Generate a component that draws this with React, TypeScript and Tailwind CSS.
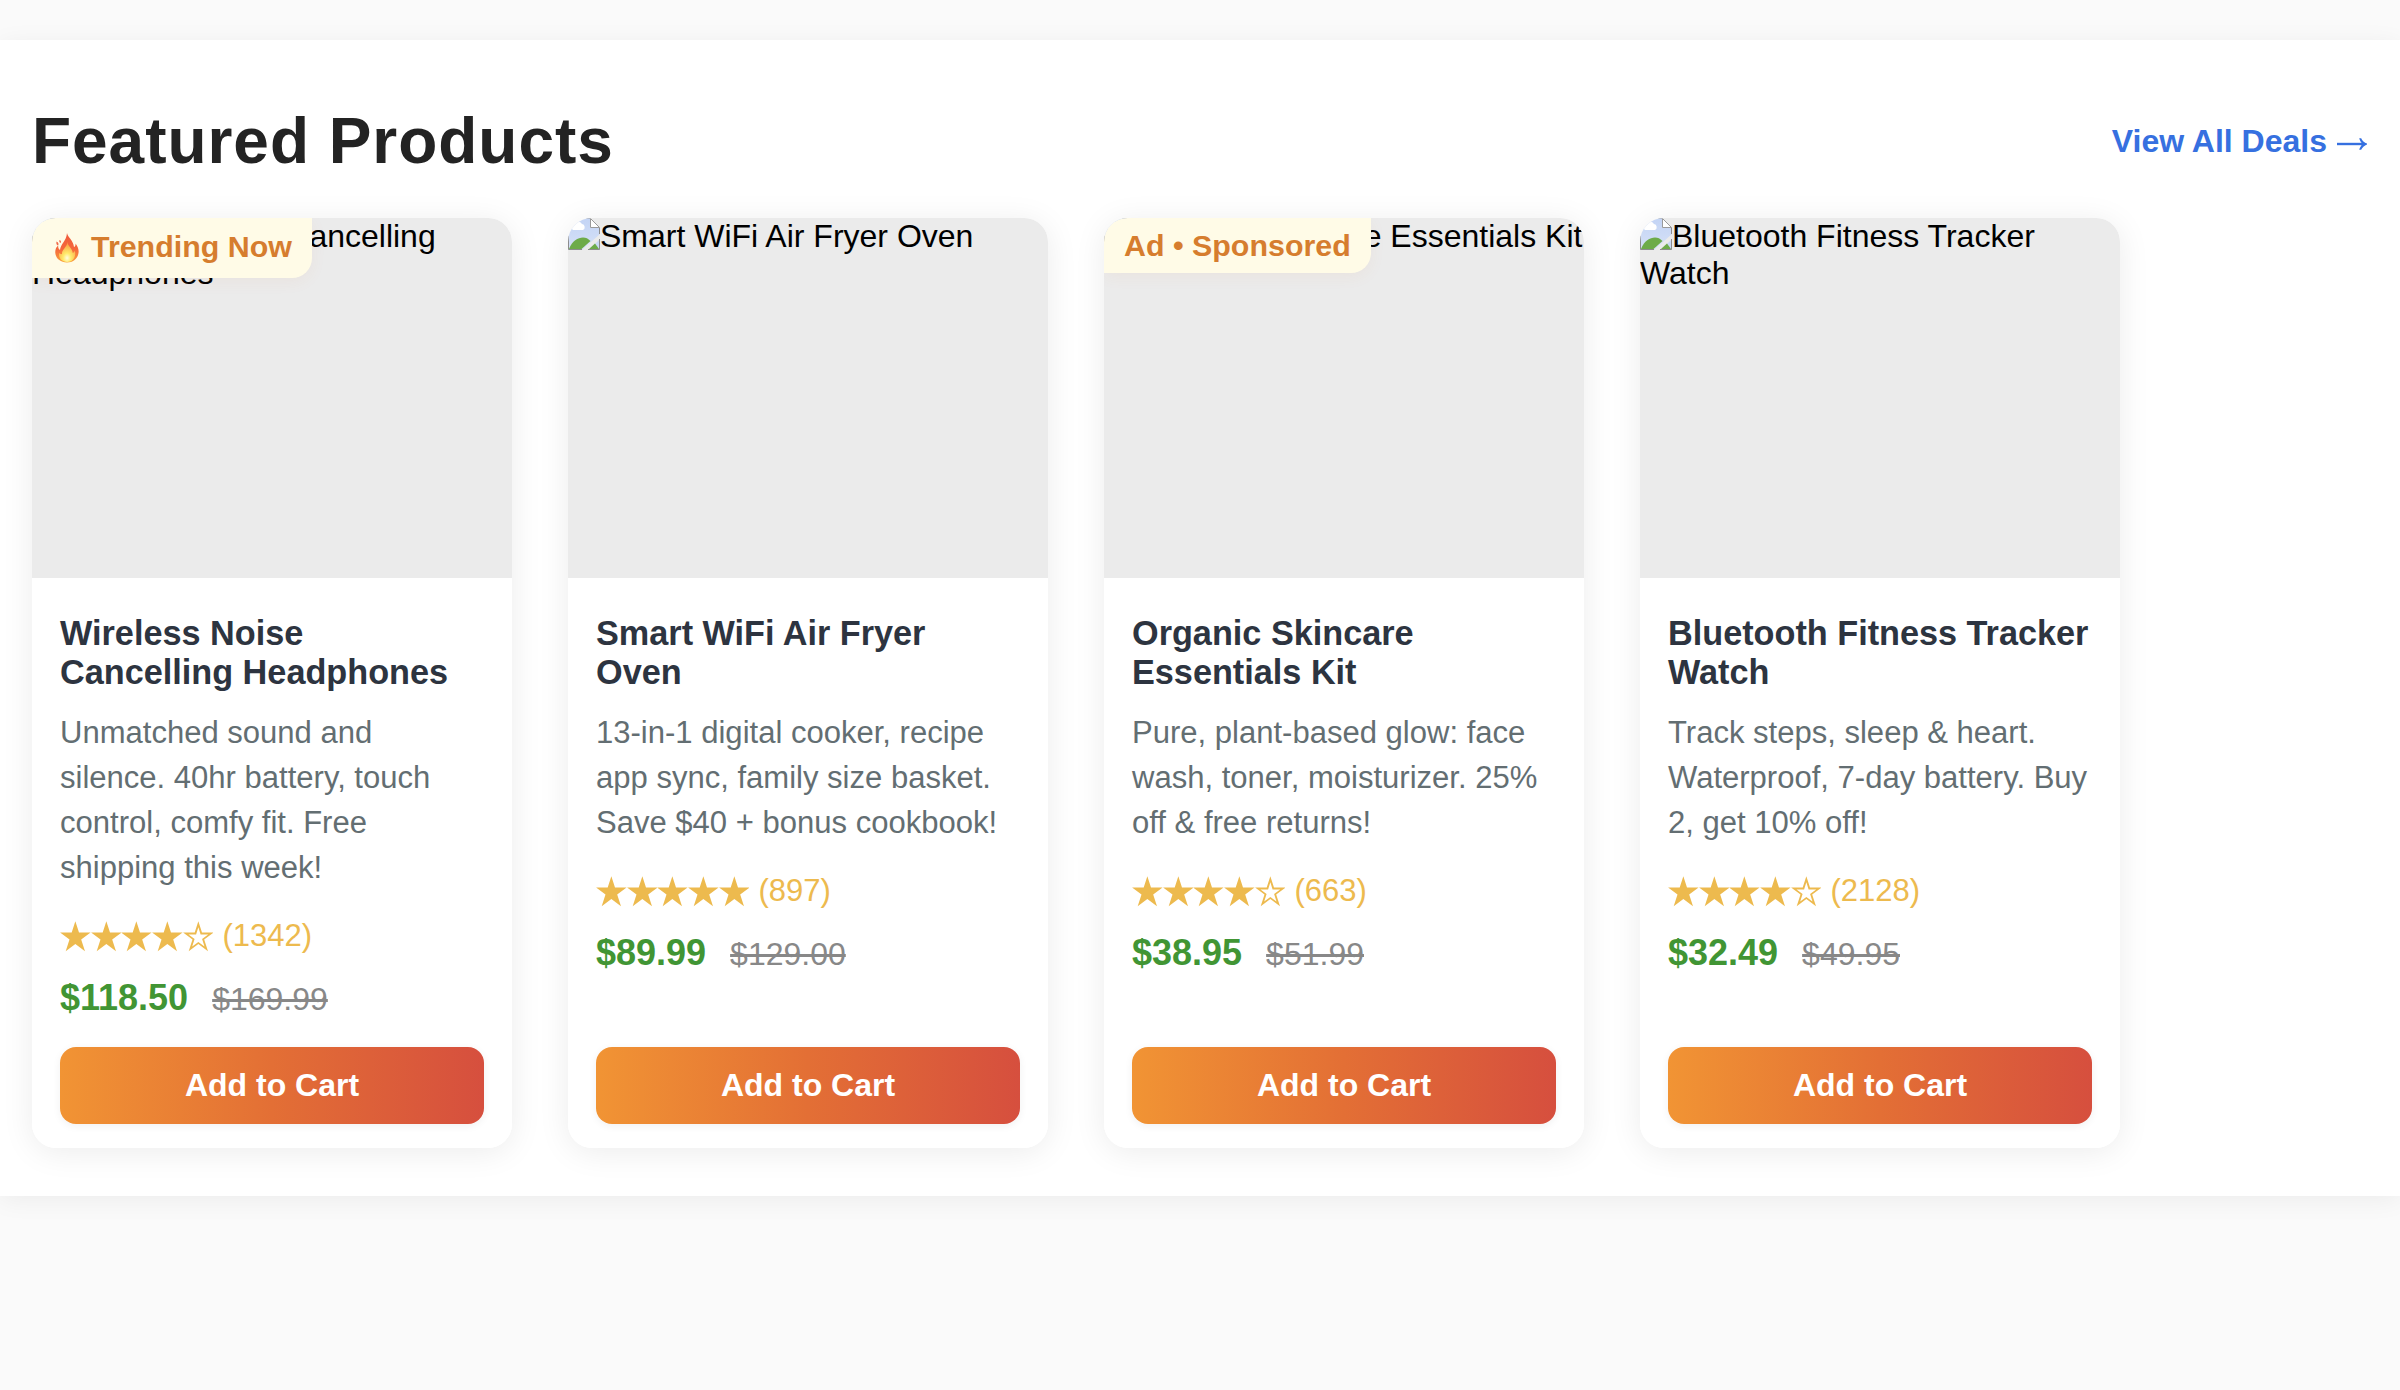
type Product = {
  title: string;
  description: string;
  stars: number;
  reviews: number;
  price: string;
  oldPrice: string;
  badge?: "trending" | "sponsored";
};

const products: Product[] = [
  {
    title: "Wireless Noise Cancelling Headphones",
    description:
      "Unmatched sound and silence. 40hr battery, touch control, comfy fit. Free shipping this week!",
    stars: 4,
    reviews: 1342,
    price: "$118.50",
    oldPrice: "$169.99",
    badge: "trending",
  },
  {
    title: "Smart WiFi Air Fryer Oven",
    description:
      "13-in-1 digital cooker, recipe app sync, family size basket. Save $40 + bonus cookbook!",
    stars: 5,
    reviews: 897,
    price: "$89.99",
    oldPrice: "$129.00",
  },
  {
    title: "Organic Skincare Essentials Kit",
    description:
      "Pure, plant-based glow: face wash, toner, moisturizer. 25% off & free returns!",
    stars: 4,
    reviews: 663,
    price: "$38.95",
    oldPrice: "$51.99",
    badge: "sponsored",
  },
  {
    title: "Bluetooth Fitness Tracker Watch",
    description:
      "Track steps, sleep & heart. Waterproof, 7-day battery. Buy 2, get 10% off!",
    stars: 4,
    reviews: 2128,
    price: "$32.49",
    oldPrice: "$49.95",
  },
];

function BrokenImageIcon() {
  return (
    <svg viewBox="0 0 32 32" className="inline-block size-8 align-top" aria-hidden="true">
      <defs>
        <linearGradient id="sky" x1="0" y1="0" x2="0" y2="1">
          <stop offset="0" stopColor="#c3d4f5" />
          <stop offset="1" stopColor="#d6e1f7" />
        </linearGradient>
      </defs>
      <path d="M0 0H22V10H32V16L14 32H0Z" fill="url(#sky)" />
      <path d="M32 21V32H21Z" fill="#c9d8f5" />
      <path d="M5 12a3 3 0 0 1 1-5.500a4.500 4.500 0 0 1 8-.5a3.200 3.200 0 0 1 1 6Z" fill="#fff" />
      <path d="M1 31C4 23 10 19.500 15 19.500C18 19.500 20 20.500 22.500 23L13.500 31Z" fill="#6dab49" />
      <path d="M21 31L27 25.500L31 31Z" fill="#6dab49" />
      <path d="M.5 0V31.500H14M20 31.500H31.500V21M31.500 16V9.500" fill="none" stroke="#8c8c8c" />
      <path d="M0 .5H22" stroke="#a6acb8" />
      <path d="M22.500 .5V9.500H31.500Z" fill="#fff" stroke="#9a9a9a" />
    </svg>
  );
}

function FlameIcon() {
  return (
    <svg viewBox="0 0 24 30" className="ml-[3px] mr-3 h-[30px] w-6" aria-hidden="true">
      <defs>
        <linearGradient id="flame" x1="0" y1="0" x2="0" y2="1">
          <stop offset="0" stopColor="#ef5a3c" />
          <stop offset=".55" stopColor="#f5683c" />
          <stop offset="1" stopColor="#f9a23b" />
        </linearGradient>
        <radialGradient id="core" cx=".5" cy=".8" r=".7">
          <stop offset="0" stopColor="#fffde0" />
          <stop offset=".35" stopColor="#ffea6b" />
          <stop offset="1" stopColor="#fba046" />
        </radialGradient>
      </defs>
      <path
        d="M12 0C12.500 4 18.500 7.500 19 14C20 13.500 20.800 12 20.500 10.500C23 13.500 24 17 23.500 20C22.600 26 18 29.500 12 29.500C5.500 29.500 .8 25.500 .3 20C0 16.500 1.200 14 3.200 12.500C3 14.500 3.600 16 5 17C5.500 11 11.500 8 12 0Z"
        fill="url(#flame)"
      />
      <path
        d="M1.500 8.500C3.500 9.500 4 11 3 12.500C1.500 12 1 10.500 1.500 8.500ZM4.500 7C6 7.500 6.500 8.800 5.500 10C4.300 9.300 4 8.300 4.500 7Z"
        fill="#f0694b"
      />
      <path
        d="M12.500 9C12.500 13 17.500 15.500 17.800 20C19 19.500 19.500 18.500 19.800 17.500C21.500 23.500 18 29 12.200 29C6.500 29 3.500 25 4 20C5 21 6 21.400 7 21C6.500 16.500 12 14.500 12.500 9Z"
        fill="url(#core)"
      />
    </svg>
  );
}

function ArrowIcon() {
  return (
    <svg viewBox="0 0 32 14" className="ml-[9px] mt-[5px] h-3.5 w-8" aria-hidden="true">
      <path d="M1 7H29" stroke="currentColor" strokeWidth="2.400" />
      <path
        d="M23.200 1.200H25.200C26.200 3.500 28.200 5.700 31 6.600V7.400C28.200 8.300 26.200 10.500 25.200 12.800H23.200C23.800 10.800 24.800 9 26.400 7C24.800 5 23.800 3.200 23.200 1.200Z"
        fill="currentColor"
      />
    </svg>
  );
}

function Star({ filled }: { filled: boolean }) {
  return (
    <svg viewBox="0 0 30.7 31" className="h-[31px] w-[30.7px]" aria-hidden="true">
      {filled ? (
        <path
          d="M15.350 .3L19 11.600H30.600L21.200 18.500L25 30.300L15.350 23.100L5.700 30.300L9.500 18.500L.1 11.600H11.700Z"
          fill="currentColor"
        />
      ) : (
        <path
          fillRule="evenodd"
          d="M15.350 .3L19 11.600H30.600L21.200 18.500L25 30.300L15.350 23.100L5.700 30.300L9.500 18.500L.1 11.600H11.700ZM15.350 6.200L13.100 13.500H5.500L11.600 17.900L9.200 25.500L15.350 21L21.500 25.500L19.100 17.900L25.200 13.500H17.600Z"
          fill="currentColor"
        />
      )}
    </svg>
  );
}

function Badge({ kind }: { kind: "trending" | "sponsored" }) {
  return (
    <div className="absolute left-0 top-0 flex items-center rounded-br-[20px] bg-[#fffbe7] px-5 py-2.5 text-[30.4px] leading-[35px] font-bold whitespace-nowrap text-[#d67d2e] shadow-[0_4px_16px_rgba(214,125,46,0.06)]">
      {kind === "trending" ? (
        <span className="flex h-10 items-center">
          <FlameIcon />
          <span className="pb-[3px]">Trending Now</span>
        </span>
      ) : (
        "Ad • Sponsored"
      )}
    </div>
  );
}

function ProductCard({ product }: { product: Product }) {
  return (
    <article className="relative flex w-[480px] flex-col overflow-hidden rounded-3xl bg-white">
      <div className="h-[360px] bg-[#ebebeb] text-[32px] leading-[37px] text-black">
        <BrokenImageIcon />
        {product.title}
      </div>
      {product.badge && <Badge kind={product.badge} />}
      <div className="flex grow flex-col px-7 pt-9 pb-6">
        <h3 className="text-[34.24px] leading-[39px] font-bold text-[#2d3440]">{product.title}</h3>
        <p className="mt-[18px] text-[31.04px] leading-[45px] text-[#636e72]">
          {product.description}
        </p>
        <div className="mt-7 flex h-9 items-center text-[31.04px] leading-9 text-[#edba4e]">
          {[0, 1, 2, 3, 4].map((i) => (
            <Star key={i} filled={i < product.stars} />
          ))}
          <span className="ml-[9px]">({product.reviews})</span>
        </div>
        <div className="mt-[23px] flex h-10 items-baseline gap-6">
          <span className="text-[36px] leading-[41px] font-bold text-[#419534]">
            {product.price}
          </span>
          <span className="text-[32px] leading-9 text-[#888888] line-through">
            {product.oldPrice}
          </span>
        </div>
        <button className="mt-auto h-[77px] rounded-2xl bg-linear-to-r/srgb from-[#f19434] via-[#e36f35] to-[#d64f3e] pb-[2px] text-[32px] font-bold text-white shadow-[0_2px_8px_rgba(0,0,0,0.06)]">
          Add to Cart
        </button>
      </div>
    </article>
  );
}

export default function App() {
  return (
    <div className="min-h-screen bg-[#fafafa] pt-10 font-['Liberation_Sans',Arial,sans-serif]">
      <section className="h-[1156px] bg-white px-8 pt-16 pb-12 shadow-[0_4px_24px_rgba(0,0,0,0.06)]">
        <header className="flex h-[74px] items-center justify-between">
          <h2 className="text-[64px] leading-[74px] font-bold tracking-[0.96px] text-[#232323]">
            Featured Products
          </h2>
          <a
            href="#"
            className="flex items-center text-[32px] leading-[37px] font-bold text-[#3670e0]"
          >
            View All Deals
            <ArrowIcon />
          </a>
        </header>
        <div className="mt-10 flex h-[930px] gap-14">
          {products.map((p) => (
            <div key={p.title} className="flex rounded-3xl shadow-[0_4px_32px_rgba(0,0,0,0.08)]">
              <ProductCard product={p} />
            </div>
          ))}
        </div>
      </section>
    </div>
  );
}
